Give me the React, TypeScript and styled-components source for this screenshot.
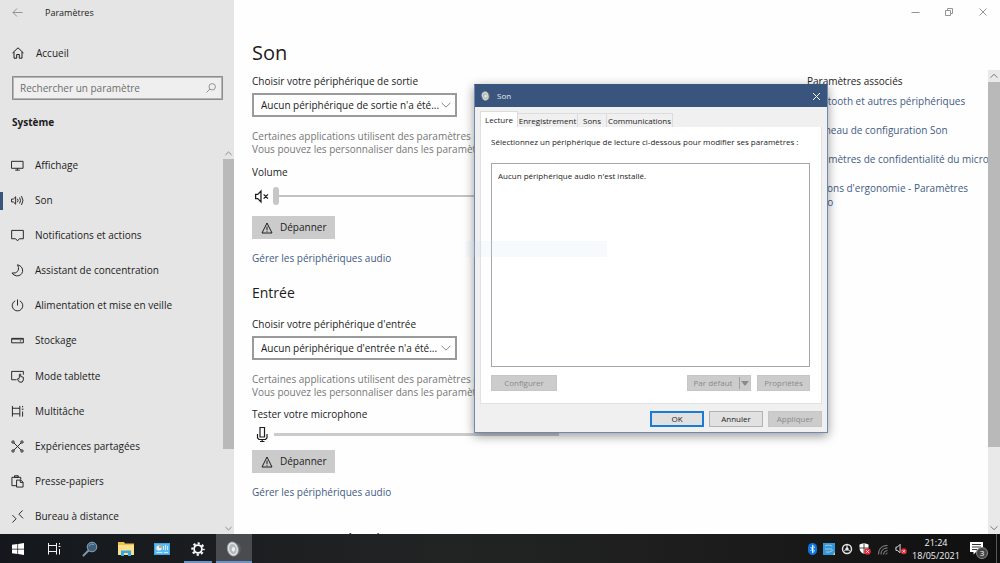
import React, { useState } from 'react';
import styled, { createGlobalStyle } from 'styled-components';

const accent = '#39557d';
const link = '#435c85';

const GlobalStyle = createGlobalStyle`
  *, *::before, *::after { box-sizing: border-box; }
  body { margin: 0; background: #fefefe; color: #1c1c1c; font: 10px/13px "Open Sans", "Noto Sans", sans-serif; }
  button, input, select { font: inherit; color: inherit; margin: 0; border-radius: 0; }
  h1, h2, h3, p, ul { margin: 0; padding: 0; }
  ul { list-style: none; }
  svg { display: block; flex: none; }
`;

const Desktop = styled.div`
  position: relative;
  display: flex;
  flex-direction: column;
  height: 100vh;
  overflow: hidden;
`;
const Settings = styled.div`
  flex: 1;
  min-height: 0;
  display: flex;
`;

/* Sidebar */
const Sidebar = styled.aside`
  width: 234px;
  flex: none;
  display: flex;
  flex-direction: column;
  background: #e5e5e5;
`;
const TitleBar = styled.header`
  display: flex;
  align-items: center;
  gap: 22px;
  height: 24px;
  padding-left: 12px;
  font-size: 9px;
`;
const IconButton = styled.button`
  display: grid;
  place-items: center;
  padding: 0;
  border: 0;
  background: none;
  color: #949494;
`;
const HomeLink = styled.a`
  display: flex;
  align-items: center;
  gap: 12px;
  height: 20px;
  margin: 19px 0 13px 12px;
  color: inherit;
  text-decoration: none;
`;
const SearchBox = styled.label`
  display: flex;
  align-items: center;
  height: 24px;
  margin: 0 11px 0 12px;
  padding: 0 6px 0 7px;
  border: 1px solid #8d8d8d;
  outline: 1px solid #b4b4b4;
  outline-offset: -2px;
  background: #efefef;
  color: #7a7a7a;
`;
const SearchInput = styled.input`
  flex: 1;
  min-width: 0;
  padding: 0;
  border: 0;
  outline: 0;
  background: none;
  &::placeholder { color: #6e6e6e; opacity: 1; }
`;
const Category = styled.h2`
  margin: 15px 12px 18px;
  font-size: 10px;
  line-height: 14px;
  font-weight: 700;
`;
const NavArea = styled.div`
  flex: 1;
  min-height: 0;
  display: flex;
`;
const NavList = styled.ul`
  flex: 1;
  display: grid;
  grid-auto-rows: 1fr;
  padding-top: 1px;
`;
const NavItem = styled.li`
  display: flex;
`;
const NavLink = styled.a<{ $active?: boolean }>`
  position: relative;
  flex: 1;
  display: flex;
  align-items: center;
  gap: 11px;
  padding-left: 11px;
  color: inherit;
  text-decoration: none;
  &::before {
    content: "";
    position: absolute;
    left: 0;
    width: 3px;
    height: 18px;
    background: ${p => (p.$active ? accent : 'transparent')};
  }
`;

/* Scroll bars */
const Rail = styled.div<{ $wide?: boolean }>`
  width: ${p => (p.$wide ? 12 : 11)}px;
  flex: none;
  display: flex;
  flex-direction: column;
  background: ${p => (p.$wide ? '#e9e9e9' : 'transparent')};
  color: #7b7b7b;
`;
const RailButton = styled(IconButton)`
  height: 12px;
  color: inherit;
`;
const RailTrack = styled.div<{ $share: number }>`
  flex: 1;
  &::before {
    content: "";
    display: block;
    height: ${p => p.$share}%;
    background: #b9b9b9;
  }
`;

/* Main page */
const Main = styled.main`
  flex: 1;
  min-width: 0;
  display: flex;
  flex-direction: column;
`;
const WindowButtons = styled.div`
  display: flex;
  justify-content: flex-end;
  gap: 20px;
  height: 24px;
  padding-right: 10px;
`;
const Page = styled.div`
  flex: 1;
  min-height: 0;
  display: flex;
`;
const PageRail = styled.div`
  display: flex;
  margin-top: 46px;
`;
const Columns = styled.div`
  flex: 1;
  min-width: 0;
  display: flex;
  justify-content: space-between;
  overflow: hidden;
`;
const Column = styled.section`
  width: 307px;
  margin-left: 18px;
`;
const PageTitle = styled.h1`
  margin: 14px 0 6px;
  font-size: 20px;
  line-height: 30px;
  font-weight: 400;
`;
const SectionTitle = styled.h2`
  font-size: 14px;
  line-height: 20px;
  font-weight: 400;
`;
const Group = styled.div<{ $top?: number }>`
  margin-top: ${p => p.$top ?? 0}px;
`;
const Caption = styled.label`
  display: block;
  line-height: 14px;
`;
const SelectWrap = styled.div`
  position: relative;
  width: 205px;
  margin: 5px 0 13px;
  svg { position: absolute; right: 6px; top: 7px; pointer-events: none; color: #888; }
`;
const Select = styled.select`
  appearance: none;
  display: block;
  width: 100%;
  height: 24px;
  padding: 0 16px 0 7px;
  border: 2px solid #9a9a9a;
  background: #fefefe;
`;
const Note = styled.p`
  color: #777;
  white-space: nowrap;
`;
const SliderRow = styled.div`
  display: flex;
  align-items: center;
  gap: 4px;
  height: 20px;
  padding-left: 2px;
`;
const Slider = styled.input`
  appearance: none;
  flex: 1;
  height: 18px;
  background: linear-gradient(#c3c3c3, #c3c3c3) center / 100% 2px no-repeat;
  &::-webkit-slider-thumb {
    appearance: none;
    width: 6px;
    height: 18px;
    border-radius: 3px;
    background: #c6c6c6;
  }
`;
const Level = styled.div`
  flex: 1;
  height: 3px;
  background: #cbcbcb;
`;
const GreyButton = styled.button`
  display: flex;
  align-items: center;
  gap: 7px;
  width: 83px;
  height: 23px;
  padding: 0 9px;
  border: 0;
  background: #cbcbcb;
`;
const TextLink = styled.a`
  display: block;
  color: ${link};
  text-decoration: none;
`;
const Related = styled.aside`
  width: 181px;
  padding-top: 50px;
  display: flex;
  flex-direction: column;
  gap: 15px;
  white-space: nowrap;
  ${TextLink} { line-height: 14px; }
`;
const RelatedTitle = styled.h3`
  margin-bottom: -9px;
  font-size: 10px;
  line-height: 14px;
  font-weight: 400;
`;

/* Sound dialog */
const Dialog = styled.div`
  position: absolute;
  left: 474px;
  top: 84px;
  width: 354px;
  border: 1px solid #6f89ae;
  border-top-color: ${accent};
  background: #f0f0f0;
  box-shadow: 0 3px 10px rgba(0, 0, 0, 0.4);
  font-size: 8px;
  line-height: 12px;
`;
const DialogTitle = styled.header`
  display: flex;
  align-items: center;
  gap: 6px;
  height: 22px;
  padding: 0 6px;
  background: ${accent};
  color: #e6eaf0;
  button { margin-left: auto; color: #fff; }
`;
const Tabs = styled.div`
  display: flex;
  align-items: flex-end;
  height: 20px;
  padding: 0 5px;
`;
const Tab = styled.button<{ $active?: boolean; $width: number }>`
  width: ${p => p.$width}px;
  height: ${p => (p.$active ? 16 : 14)}px;
  padding: 0;
  border: 1px solid #dcdcdc;
  border-bottom: 0;
  border-left-width: ${p => (p.$active ? 1 : 0)}px;
  background: ${p => (p.$active ? '#fff' : '#f0f0f0')};
  line-height: 12px;
  white-space: nowrap;
`;
const TabPanel = styled.div`
  margin: 0 5px 7px;
  padding: 9px 11px 12px 10px;
  border: 1px solid #e2e2e2;
  border-top: 0;
  background: #fff;
`;
const DeviceList = styled.div`
  height: 204px;
  margin: 15px 0 8px;
  padding: 6px;
  border: 1px solid #a3a7af;
`;
const ButtonRow = styled.div<{ $outer?: boolean }>`
  display: flex;
  justify-content: flex-end;
  gap: ${p => (p.$outer ? 5 : 6)}px;
  padding: ${p => (p.$outer ? '0 5px 5px' : '0')};
`;
const DialogButton = styled.button<{ $width: number; $first?: boolean; $main?: boolean }>`
  display: flex;
  align-items: center;
  justify-content: center;
  width: ${p => p.$width}px;
  height: 16px;
  margin-right: ${p => (p.$first ? 'auto' : '0')};
  padding: 0;
  border: ${p => (p.$main ? '2px solid #1a7bd4' : '1px solid #b2b2b2')};
  background: #e1e1e1;
  &:disabled { border-color: #c6c6c6; background: #cccccc; color: #8b8b8b; }
`;
const SplitArrow = styled.span`
  display: grid;
  place-items: center;
  width: 10px;
  height: 12px;
  margin: 0 -5px 0 7px;
  border-left: 1px solid #a0a0a0;
`;
const FadingMenu = styled.div`
  position: absolute;
  left: 466px;
  top: 241px;
  width: 141px;
  height: 16px;
  background: rgba(205, 222, 240, 0.16);
  pointer-events: none;
`;

/* Taskbar */
const Taskbar = styled.footer`
  display: flex;
  height: 29px;
  flex: none;
  background: linear-gradient(90deg, #14171c, #222424 45%, #1c1b1b 75%, #100f0f);
  color: #f2f2f2;
`;
const TaskButton = styled.button<{ $open?: boolean; $active?: boolean }>`
  position: relative;
  display: grid;
  place-items: center;
  width: 36px;
  padding: 0;
  border: 0;
  background: ${p => (p.$active ? '#4a4b4e' : 'none')};
  &::after {
    content: "";
    position: absolute;
    bottom: 0;
    left: ${p => (p.$active ? 0 : 4)}px;
    right: ${p => (p.$active ? 0 : 4)}px;
    height: 2px;
    background: ${p => (p.$open ? '#6c93c4' : 'transparent')};
  }
`;
const Tray = styled.div`
  display: flex;
  align-items: center;
  gap: 6px;
  margin-left: auto;
  padding-right: 3px;
`;
const Clock = styled.time`
  margin-left: -1px;
  width: 48px;
  font-size: 9px;
  text-align: center;
  white-space: nowrap;
`;
const Notices = styled.button`
  position: relative;
  margin: 0 7px 0 4px;
  padding: 0;
  border: 0;
  background: none;
`;
const Count = styled.span`
  position: absolute;
  left: 6px;
  top: 5px;
  width: 12px;
  height: 12px;
  border: 1px solid #888;
  border-radius: 50%;
  background: #444;
  color: #fff;
  font-size: 8px;
  line-height: 10px;
`;
const PeekEdge = styled.div`
  width: 1px;
  height: 29px;
  background: #555;
`;

const Line = ({ children, size = 14, box = 14, width = 1 }: { children: React.ReactNode; size?: number; box?: number; width?: number }) => (
  <svg width={size} height={size} viewBox={`0 0 ${box} ${box}`} fill="none" stroke="currentColor" strokeWidth={width} aria-hidden="true">
    {children}
  </svg>
);

const Chevron = ({ up, size = 8 }: { up?: boolean; size?: number }) => (
  <Line size={size} box={8} width={size > 8 ? 0.8 : 1}><path d={up ? 'M.5 5.700 4 2.300 7.500 5.700' : 'M.5 2.300 4 5.700 7.500 2.300'} /></Line>
);
const Warning = () => (
  <Line size={12} box={12}><path d="M6 1 11 11H1ZM6 4.500V8M6 8.800v1" /></Line>
);
const Speaker = ({ size = 14 }: { size?: number }) => (
  <svg width={size} height={size} viewBox="0 0 14 14" aria-hidden="true">
    <path d="M6 1 11.500 2.500Q14.500 7 11.500 11.500L8 13Z" fill="#5b5e60" />
    <ellipse cx="6" cy="7" rx="4.800" ry="6.300" transform="rotate(-14 6 7)" fill="#dfe2e2" stroke="#8f9496" strokeWidth=".7" />
    <ellipse cx="6" cy="7" rx="3.200" ry="4.500" transform="rotate(-14 6 7)" fill="#b4babb" />
    <ellipse cx="6.500" cy="7.300" rx="1.400" ry="2" fill="#eef0f0" />
  </svg>
);
const TaskViewShape = () => (
  <path d="M1.500 1v11.500M9.500 1v11.500M1.500 3.500h8M1.500 9.500h8M12.500 1v1.500M12.500 7v5.500M11.500 4.500h2" />
);

const navItems: { label: string; icon: React.ReactNode }[] = [
  { label: 'Affichage', icon: <path d="M.5 2.500h12.500v7.500H.5ZM4.500 12h5M6.800 10v2" /> },
  { label: 'Son', icon: <><path d="M.5 5.500h2L5 3v8L2.500 8.500h-2ZM7 5.200q1.200 1.800 0 3.600M9.200 3.800q2.200 3.200 0 6.400M11.300 2.200q3.200 4.800 0 9.600" /></> },
  { label: 'Notifications et actions', icon: <path d="M.7 1.500h12.600v9H9L7 12.800 5 10.500H.7Z" /> },
  { label: 'Assistant de concentration', icon: <path d="M7 .8Q13 2.500 12.500 8 11.500 12.800 6 12.800 3 12.300 1 9.800 6 10.500 7.800 7 8.800 4 7 .8Z" /> },
  { label: 'Alimentation et mise en veille', icon: <path d="M7 .5V7M4.500 2a5.700 5.700 0 1 0 5 0" /> },
  { label: 'Stockage', icon: <path d="M.7 4.700h12.600v4.800H.7ZM1 5.500h12M9.500 7.500H11" /> },
  { label: 'Mode tablette', icon: <path d="M6 10.500H.7v-9h12.600V5M9 9V4.700q1-1 1.500 0V7l2.800.8v3L12 13H9L6.800 9.800 7.500 9 9 10" /> },
  { label: 'Multitâche', icon: <TaskViewShape /> },
  { label: 'Expériences partagées', icon: <><path d="m3 3 8 8M11 3l-8 8" /><circle cx="2.200" cy="2.200" r="1.300" /><circle cx="11.800" cy="2.200" r="1.300" /><circle cx="2.200" cy="11.800" r="1.300" /><circle cx="11.800" cy="11.800" r="1.300" /></> },
  { label: 'Presse-papiers', icon: <path d="M6 11.500H1v-9h9.500V5M3.800 2.500v-1.700h4v1.700ZM6 5.500h4.500l2.500 2.200V13H6ZM10 5.500V8h3" /> },
  { label: 'Bureau à distance', icon: <path d="M1.500 5.500 5.500 9.500 1.500 13.500M12.500.5 8.500 4.500l4.500 4.500" /> },
];

export default function App() {
  const [volume, setVolume] = useState(0);
  return (
    <>
      <GlobalStyle />
      <Desktop>
        <Settings>
          <Sidebar>
            <TitleBar>
              <IconButton aria-label="Retour"><Line size={11} box={11}><path d="M10.500 5.500H1M5 1.500 1 5.500l4 4" /></Line></IconButton>
              Paramètres
            </TitleBar>
            <HomeLink href="#accueil">
              <Line size={12} box={12}><path d="M.5 6 6 .8l5.500 5.200M2 5v6.200h2.700V7.500h2.600v3.700H10V5" /></Line>
              Accueil
            </HomeLink>
            <SearchBox>
              <SearchInput type="search" placeholder="Rechercher un paramètre" aria-label="Rechercher un paramètre" />
              <Line size={10} box={10} width={0.8}><circle cx="6.200" cy="3.800" r="3.200" /><path d="M4 6 .5 9.500" /></Line>
            </SearchBox>
            <Category>Système</Category>
            <NavArea>
              <NavList>
                {navItems.map(item => (
                  <NavItem key={item.label}>
                    <NavLink href="#" $active={item.label === 'Son'}>
                      <Line size={13}>{item.icon}</Line>
                      {item.label}
                    </NavLink>
                  </NavItem>
                ))}
              </NavList>
              <Rail>
                <RailButton aria-label="Monter"><Chevron up size={7} /></RailButton>
                <RailTrack $share={80} />
                <RailButton aria-label="Descendre"><Chevron size={7} /></RailButton>
              </Rail>
            </NavArea>
          </Sidebar>

          <Main>
            <WindowButtons>
              <IconButton aria-label="Réduire"><Line><path d="M3.500 7.500h8" /></Line></IconButton>
              <IconButton aria-label="Restaurer"><Line><path d="M3.500 5.500h5v5h-5ZM5.500 5.500v-2h5v5h-2" /></Line></IconButton>
              <IconButton aria-label="Fermer"><Line><path d="m3.500 3.500 7 7M10.500 3.500l-7 7" /></Line></IconButton>
            </WindowButtons>
            <Page>
              <Columns>
                <Column>
                  <PageTitle>Son</PageTitle>
                  <Caption htmlFor="output">Choisir votre périphérique de sortie</Caption>
                  <SelectWrap>
                    <Select id="output"><option>Aucun périphérique de sortie n'a été...</option></Select>
                    <Chevron size={10} />
                  </SelectWrap>
                  <Note>Certaines applications utilisent des paramètres de son<br />Vous pouvez les personnaliser dans les paramètres</Note>
                  <Group $top={9}>
                    <Caption htmlFor="volume">Volume</Caption>
                    <Group $top={7}>
                      <SliderRow>
                        <Line size={15} width={1.2}><path d="M1.500 5h2L6.500 2v10L3.500 9h-2ZM9 5l4 4M13 5 9 9" /></Line>
                        <Slider id="volume" type="range" value={volume} onChange={e => setVolume(Number(e.target.value))} />
                      </SliderRow>
                    </Group>
                  </Group>
                  <Group $top={10}><GreyButton><Warning />Dépanner</GreyButton></Group>
                  <Group $top={13}><TextLink href="#gerer">Gérer les périphériques audio</TextLink></Group>
                  <Group $top={18}><SectionTitle>Entrée</SectionTitle></Group>
                  <Group $top={14}>
                    <Caption htmlFor="input">Choisir votre périphérique d'entrée</Caption>
                    <SelectWrap>
                      <Select id="input"><option>Aucun périphérique d'entrée n'a été...</option></Select>
                      <Chevron size={10} />
                    </SelectWrap>
                  </Group>
                  <Note>Certaines applications utilisent des paramètres d'entrée<br />Vous pouvez les personnaliser dans les paramètres</Note>
                  <Group $top={8}>
                    <Caption as="p">Tester votre microphone</Caption>
                    <Group $top={3}>
                      <SliderRow>
                        <Line size={16} box={16} width={1.2}><path d="M6 1.500h4.500V11H6ZM3.500 8v4l1.500 1.500h6.500L13 12V8M8.200 13.500V16M6 15.500h4.500" /></Line>
                        <Level role="meter" aria-label="Niveau du microphone" aria-valuenow={0} />
                      </SliderRow>
                    </Group>
                  </Group>
                  <Group $top={6}><GreyButton><Warning />Dépanner</GreyButton></Group>
                  <Group $top={13}><TextLink href="#gerer-entree">Gérer les périphériques audio</TextLink></Group>
                  <Group $top={30}><SectionTitle>Options avancées du son</SectionTitle></Group>
                </Column>
                <Related>
                  <RelatedTitle>Paramètres associés</RelatedTitle>
                  <TextLink href="#bt">Bluetooth et autres périphériques</TextLink>
                  <TextLink href="#panneau">Panneau de configuration Son</TextLink>
                  <TextLink href="#micro">Paramètres de confidentialité du micro</TextLink>
                  <TextLink href="#ergo">Options d'ergonomie - Paramètres<br />audio</TextLink>
                </Related>
              </Columns>
              <PageRail>
                <Rail $wide>
                  <RailButton aria-label="Monter"><Chevron up /></RailButton>
                  <RailTrack $share={83} />
                  <RailButton aria-label="Descendre"><Chevron /></RailButton>
                </Rail>
              </PageRail>
            </Page>
          </Main>
        </Settings>

        <Dialog role="dialog" aria-label="Son">
          <DialogTitle>
            <Speaker size={10} />
            Son
            <IconButton aria-label="Fermer la fenêtre"><Line size={9} box={9}><path d="m1 1 7 7M8 1 1 8" /></Line></IconButton>
          </DialogTitle>
          <Tabs role="tablist">
            <Tab role="tab" aria-selected $active $width={38}>Lecture</Tab>
            <Tab role="tab" $width={60}>Enregistrement</Tab>
            <Tab role="tab" $width={29}>Sons</Tab>
            <Tab role="tab" $width={66}>Communications</Tab>
          </Tabs>
          <TabPanel role="tabpanel">
            <p>Sélectionnez un périphérique de lecture ci-dessous pour modifier ses paramètres :</p>
            <DeviceList>Aucun périphérique audio n'est installé.</DeviceList>
            <ButtonRow>
              <DialogButton $width={66} $first disabled>Configurer</DialogButton>
              <DialogButton $width={64} disabled>
                Par défaut
                <SplitArrow><svg width="8" height="5" viewBox="0 0 8 5"><path d="M0 0h8L4 5Z" fill="#8b8b8b" /></svg></SplitArrow>
              </DialogButton>
              <DialogButton $width={53} disabled>Propriétés</DialogButton>
            </ButtonRow>
          </TabPanel>
          <ButtonRow $outer>
            <DialogButton $width={54} $main>OK</DialogButton>
            <DialogButton $width={54}>Annuler</DialogButton>
            <DialogButton $width={54} disabled>Appliquer</DialogButton>
          </ButtonRow>
        </Dialog>
        <FadingMenu />

        <Taskbar>
          <TaskButton aria-label="Démarrer">
            <svg width="12" height="12" viewBox="0 0 12 12" fill="#fff"><path d="M0 1.700 5.400 1v4.700H0ZM6.100.9 12 0v5.700H6.100ZM0 6.400h5.400v4.700L0 10.300ZM6.100 6.400H12V12l-5.900-.9Z" /></svg>
          </TaskButton>
          <TaskButton aria-label="Affichage des tâches"><Line size={14}><TaskViewShape /></Line></TaskButton>
          <TaskButton aria-label="Rechercher">
            <svg width="16" height="16" viewBox="0 0 16 16"><path d="M6.500 9.500 1.500 14.500" stroke="#8197a8" strokeWidth="2" strokeLinecap="round" /><circle cx="10" cy="6" r="4.800" fill="#3d607f" stroke="#8fa4b4" /><path d="M7 5q2-3 5-1.500" stroke="#7fa2c0" fill="none" /></svg>
          </TaskButton>
          <TaskButton aria-label="Explorateur">
            <svg width="16" height="14" viewBox="0 0 16 14"><path d="M0 0h6l1 1.500h9V13H0Z" fill="#f0bf4c" /><path d="M0 3h16v10H0Z" fill="#fde08a" /><path d="M3 14V8.500h10V14h-3v-3H6v3Z" fill="#35a7e6" /></svg>
          </TaskButton>
          <TaskButton aria-label="Panneau de configuration">
            <svg width="16" height="12" viewBox="0 0 16 12"><path d="M0 0h16v12H0Z" fill="#3fa5e4" /><path d="M1 1h14v10H1Z" fill="#5cbcf0" /><circle cx="5" cy="5" r="2.600" fill="#e8f4fb" /><path d="M5 5V2.400A2.600 2.600 0 0 1 7.600 5Z" fill="#f29a2e" /><path d="M9.500 3v4M11.500 2v5M13.500 3v4M2.500 9.500h6M10 9.500h4" stroke="#e8f4fb" strokeWidth=".8" /></svg>
          </TaskButton>
          <TaskButton aria-label="Paramètres" $open>
            <svg width="14" height="14" viewBox="0 0 14 14" fill="none" stroke="#fff"><circle cx="7" cy="7" r="3.900" strokeWidth="1.800" /><circle cx="7" cy="7" r="5.700" strokeWidth="2" strokeDasharray="2.240 2.240" strokeDashoffset="1.100" /></svg>
          </TaskButton>
          <TaskButton aria-label="Son" $open $active><Speaker size={16} /></TaskButton>
          <Tray>
            <svg width="9" height="12" viewBox="0 0 9 12"><rect width="9" height="12" rx="4.500" fill="#0a74e0" /><path d="m2.500 4 4 4-2 1.800V2.200l2 1.800-4 4" fill="none" stroke="#fff" strokeWidth=".9" /></svg>
            <svg width="12" height="12" viewBox="0 0 12 12"><path d="M0 0h12v12H0Z" fill="#3597d6" /><path d="M2 3q3-2 7 0M2 6h7M3 9q4 1 7-2" fill="none" stroke="#b9dcef" strokeWidth=".8" /><path d="M10 12 12 9v3Z" fill="#e8d36a" /></svg>
            <svg width="12" height="12" viewBox="0 0 12 12" fill="none" stroke="#e8e8e8"><circle cx="6" cy="6" r="4.500" strokeWidth="1.400" /><path d="M6 1v4M6 6 2.500 8.500M6 6l3.500 2.500" /><circle cx="6" cy="6" r="1.200" fill="#e8e8e8" /></svg>
            <svg width="12" height="12" viewBox="0 0 12 12"><path d="M5 0 9.500 1.500V5q0 4-4.500 6Q.5 9 .5 5V1.500Z" fill="#fff" /><path d="M5 0v11M0 5h10" stroke="#222" strokeWidth=".8" /><circle cx="8.500" cy="8.500" r="3.300" fill="#e02b35" /><path d="m7.200 7.200 2.600 2.600m0-2.600L7.200 9.800" stroke="#fff" strokeWidth=".9" /></svg>
            <svg width="12" height="12" viewBox="0 0 12 12" fill="none" stroke="#8b8b8b"><path d="M1.500 11.500q0-9 9-9M4 11.500q0-6.500 6.500-6.500M6.500 11.500q0-4 4-4M9 11.500q0-1.500 1.500-1.500" /></svg>
            <svg width="12" height="12" viewBox="0 0 13 12"><path d="M1 4h1.500L5.500 1v9L2.500 7.500H1Z" fill="none" stroke="#eee" /><circle cx="9.500" cy="8.500" r="3.200" fill="#e02b35" /><path d="m8.200 7.200 2.600 2.600m0-2.600L8.200 9.800" stroke="#fff" strokeWidth=".9" /></svg>
            <Clock>21:24<br />18/05/2021</Clock>
            <Notices aria-label="Notifications">
              <svg width="13" height="13" viewBox="0 0 13 13"><path d="M0 0h13v10H6L3.500 12.500V10H0Z" fill="#fff" /><path d="M2 2.500h9M2 5h9M2 7.500h5" stroke="#333" /></svg>
              <Count>3</Count>
            </Notices>
            <PeekEdge />
          </Tray>
        </Taskbar>
      </Desktop>
    </>
  );
}
